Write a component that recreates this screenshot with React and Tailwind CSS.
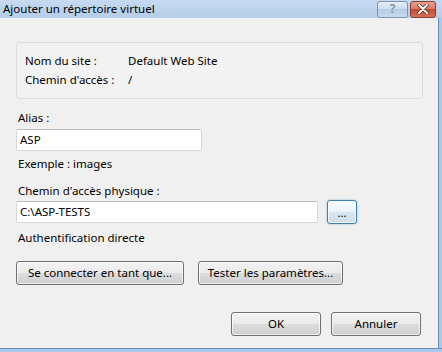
import React from "react";

const btn =
  "h-6 rounded-[3px] border border-[#707070] bg-[linear-gradient(#f2f2f2_0%,#ebebeb_50%,#dddddd_50%,#cfcfcf_100%)] text-[11.5px] text-black shadow-[inset_0_0_0_1px_rgba(255,255,255,0.7)]";

const input =
  "h-[22px] border border-[#d4d7db] border-t-[#b8bcc2] rounded-[2px] bg-white pl-[3px] text-[11.5px] leading-[20px] text-black";

export default function App() {
  return (
    <div
      className="flex h-[352px] w-[442px] flex-col bg-[#f0f0f0] text-[11.5px] text-black"
      style={{ fontFamily: '"Noto Sans", "Open Sans", sans-serif' }}
    >
      {/* title bar */}
      <div className="flex h-[18px] items-center justify-between bg-[linear-gradient(#c6daf0,#b5cde9)] pl-[3px] pr-[6px]">
        <span className="text-[11.5px] leading-none">Ajouter un répertoire virtuel</span>
        <div className="flex items-center gap-[2px]">
          <div className="flex h-[17px] w-[31px] items-center justify-center rounded-[3px] border border-[#7f93ad] bg-[linear-gradient(#e4eef9_0%,#cbdcef_50%,#b6cbe5_50%,#c9dbef_100%)] text-[12px] font-bold leading-none text-[#8a97a6]">
            ?
          </div>
          <div className="flex h-[17px] w-[26px] items-center justify-center rounded-[3px] border border-[#8a3a2d] bg-[linear-gradient(#e7a18f_0%,#d9765f_50%,#c24b30_50%,#d3735b_100%)]">
            <svg width="12" height="10" viewBox="0 0 12 10">
              <path d="M2 1 L10 9 M10 1 L2 9" stroke="#5a2018" strokeWidth="3.4" strokeLinecap="round" />
              <path d="M2 1 L10 9 M10 1 L2 9" stroke="#ffffff" strokeWidth="2" strokeLinecap="round" />
            </svg>
          </div>
        </div>
      </div>

      <div className="flex flex-1">
        {/* body */}
        <div className="flex flex-1 flex-col pl-4 pr-[15px]">
          <div className="mt-6 rounded-[3px] border border-[#dcdcdc] bg-[#f2f2f2] pb-[9px] pl-2 pt-2">
            <div className="flex h-[19px] items-center">
              <span className="w-[103px]">Nom du site :</span>
              <span>Default Web Site</span>
            </div>
            <div className="flex h-[19px] items-center">
              <span className="w-[103px]">Chemin d'accès :</span>
              <span>/</span>
            </div>
          </div>

          <div className="mt-[11px] h-4 pl-[2px] leading-4">Alias :</div>
          <div className={`mt-[3px] w-[186px] ${input}`}>ASP</div>
          <div className="mt-[5px] h-4 pl-[2px] leading-4">Exemple : images</div>

          <div className="mt-[11px] h-4 pl-[2px] leading-4">Chemin d'accès physique :</div>
          <div className="mt-[2px] flex items-start">
            <div className={`w-[302px] ${input}`}>C:\ASP-TESTS</div>
            <button className="ml-[9px] -mt-px h-6 w-[30px] rounded-[3px] border border-[#3c7fb1] bg-[linear-gradient(#f7fbfe_0%,#eaf3fa_50%,#d8e7f2_50%,#cfdde9_100%)] text-[11px] leading-none shadow-[0_0_2px_rgba(60,127,177,0.6),inset_0_0_0_1px_rgba(255,255,255,0.8)]">
              ...
            </button>
          </div>
          <div className="mt-[6px] h-4 pl-[2px] leading-4">Authentification directe</div>

          <div className="mt-[15px] flex gap-[14px]">
            <button className={`w-[168px] ${btn}`}>Se connecter en tant que...</button>
            <button className={`w-[145px] ${btn}`}>Tester les paramètres...</button>
          </div>

          <div className="mt-[27px] flex justify-end gap-[10px] pr-[2px]">
            <button className={`w-[90px] ${btn}`}>OK</button>
            <button className={`w-[90px] ${btn}`}>Annuler</button>
          </div>
        </div>
        {/* right frame edge */}
        <div className="w-[4px] border-l border-[#6c8fb8] bg-[#a9c9ec]" />
      </div>
      <div className="h-[4px] border-t border-[#6c8fb8] bg-[#a9c9ec]" />
    </div>
  );
}
